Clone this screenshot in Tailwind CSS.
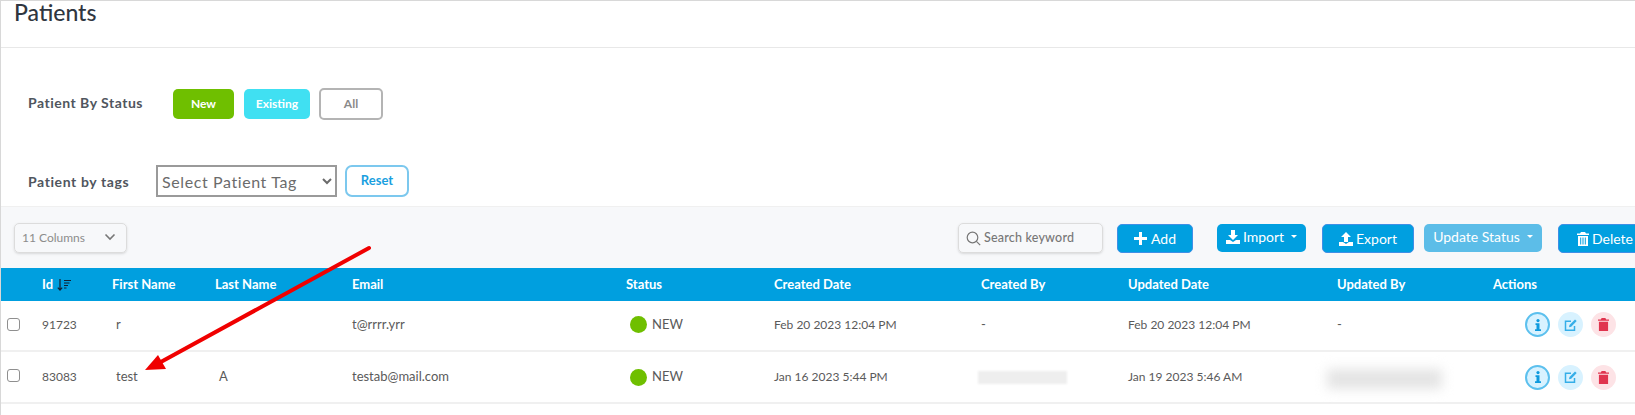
<!DOCTYPE html>
<html lang="en">
<head>
    <meta charset="UTF-8">
    <title>Patients</title>
    <script src="https://cdn.jsdelivr.net/npm/@tailwindcss/browser@4"></script>
</head>
<body class="bg-white overflow-hidden font-[Lato,sans-serif]">
<div class="relative w-[1635px] h-[415px] overflow-hidden border-l border-t border-[#d8d8d8]">
    <!-- title -->
    <div class="h-[47px] border-b border-[#e8e8e8] pl-[13px]">
        <h1 class="text-[23px] leading-[22px] text-[#2f3640] font-medium">Patients</h1>
    </div>

    <!-- status filter -->
    <div class="flex items-center h-[32px] mt-[40px] pl-[27px]">
        <span class="w-[145px] pb-[3px] text-[14px] font-bold tracking-[0.5px] text-[#50565e]">Patient By Status</span>
        <button class="w-[61px] h-[30px] rounded-[5px] bg-[#6fbf00] text-white text-[12px] font-bold">New</button>
        <button class="w-[66px] h-[30px] ml-[10px] rounded-[5px] bg-[#40e0f2] text-white text-[12px] font-bold">Existing</button>
        <button class="w-[64px] h-[32px] ml-[9px] rounded-[5px] border-2 border-[#b4b4b4] text-[#8a8a8a] text-[12px] font-bold">All</button>
    </div>

    <!-- tag filter -->
    <div class="flex items-center h-[32px] mt-[45px] pl-[27px]">
        <span class="w-[128px] text-[14px] font-bold tracking-[0.6px] text-[#50565e]">Patient by tags</span>
        <select class="w-[181px] h-[32px] border-2 border-[#9a9a9a] text-[#6b6b6b] text-[16px] tracking-[0.6px]">
            <option>Select Patient Tag</option>
        </select>
        <button class="w-[64px] h-[32px] ml-[8px] rounded-[7px] border-2 border-[#7cc8ee] text-[#1a9fe0] text-[13px] font-bold">Reset</button>
    </div>

    <!-- toolbar -->
    <div class="flex items-start h-[62px] mt-[9px] pt-[16px] pl-[13px] bg-[#f7f8fa] border-t border-[#f0f0f0]">
        <div class="flex items-center justify-between shrink-0 w-[113px] h-[30px] px-[7px] rounded-[5px] border border-[#dcdcdc] shadow-sm text-[12px] text-[#8c8c8c]">
            <span>11 Columns</span>
            <svg class="w-[12px] h-[12px] mr-[3px] mb-[3px]" viewBox="0 0 12 12" fill="none" stroke="#777" stroke-width="1.6"><path d="M1.5 3.5 6 8l4.5-4.5"/></svg>
        </div>

        <div class="flex items-center shrink-0 w-[145px] h-[30px] ml-[831px] pl-[7px] rounded-[5px] border border-[#dcdcdc] shadow-sm text-[12.5px] font-medium tracking-[0.2px] text-[#777]">
            <svg class="w-[15px] h-[15px] mr-[3px]" viewBox="0 0 15 15" fill="none" stroke="#777" stroke-width="1.2"><circle cx="6.5" cy="6.5" r="5.3"/><path d="m10.4 10.4 3.800 3.800"/></svg>
            <span>Search keyword</span>
        </div>

        <button class="flex items-center justify-center shrink-0 gap-[4px] w-[76px] h-[29px] ml-[14px] mt-[1px] rounded-[5px] bg-[#009fe0] border border-[#3f8fe6] text-white text-[14px]">
            <svg class="w-[13px] h-[13px]" viewBox="0 0 13 13" fill="#fff"><path d="M5 0h3v5h5v3H8v5H5V8H0V5h5z"/></svg>
            Add
        </button>

        <button class="flex items-center justify-center shrink-0 w-[89px] h-[28px] ml-[24px] mt-[1px] rounded-[5px] bg-[#009fe0] text-white text-[14px] pb-[3px]">
            <svg class="w-[14px] h-[14px] mr-[3px]" viewBox="0 0 14 14" fill="#fff"><path d="M5 0h4v5h3L7 10 2 5h3zM0 10h4l3 2 3-2h4v4H0z"/></svg>
            Import
            <span class="ml-[7px] border-x-[3px] border-t-[3px] border-x-transparent border-t-white"></span>
        </button>

        <button class="flex items-center justify-center shrink-0 w-[92px] h-[29px] ml-[16px] mt-[1px] rounded-[5px] bg-[#009fe0] border border-[#3f8fe6] text-white text-[14px]">
            <svg class="w-[14px] h-[14px] mr-[3px]" viewBox="0 0 14 14" fill="#fff"><path d="M7 0l5 5H9v5H5V5H2zM0 10h4l3 2 3-2h4v4H0z"/></svg>
            Export
        </button>

        <button class="flex items-center justify-center shrink-0 w-[118px] h-[28px] ml-[10px] mt-[1px] rounded-[5px] bg-[#5cbde8] text-white text-[14px] pb-[3px]">
            Update Status
            <span class="ml-[7px] border-x-[3px] border-t-[3px] border-x-transparent border-t-white"></span>
        </button>

        <button class="flex items-center shrink-0 w-[100px] h-[29px] ml-[16px] mt-[1px] pl-[18px] rounded-[5px] bg-[#009fe0] border border-[#3f8fe6] text-white text-[14px]">
            <svg class="w-[12px] h-[14px] mr-[3px]" viewBox="0 0 12 14" fill="#fff"><path d="M4 0h4l1 1.500h3V3H0V1.500h3zM1 4h10v10H1zm2.200 1.500v7h1v-7zm2.300 0v7h1v-7zm2.300 0v7h1v-7z" fill-rule="evenodd"/></svg>
            Delete
        </button>
    </div>

    <!-- table head -->
    <div class="grid grid-cols-[41px_70px_103px_137px_274px_148px_207px_147px_209px_156px_143px] items-center h-[33px] bg-[#009fdf] text-white text-[13px] font-bold">
        <div></div>
        <div class="flex items-center gap-[4px]">Id
            <svg class="w-[14px] h-[12px]" viewBox="0 0 14 12" fill="none" stroke="#123" stroke-width="1.2"><path d="M3 0v11M.8 8.600 3 11l2.200-2.400M7 1.500h7M7 4h5.500M7 6.500h4M7 9h2.500"/></svg>
        </div>
        <div>First Name</div>
        <div>Last Name</div>
        <div>Email</div>
        <div>Status</div>
        <div>Created Date</div>
        <div>Created By</div>
        <div>Updated Date</div>
        <div>Updated By</div>
        <div>Actions</div>
    </div>

    <!-- rows -->
    <div class="grid grid-cols-[41px_70px_103px_137px_274px_148px_207px_147px_209px_156px_143px] items-center h-[51px] border-b-2 border-[#f0f0f0] text-[13px] text-[#5a5a5a] pb-[2px]">
        <div class="pl-[6px]"><div class="w-[13px] h-[13px] mb-[1px] rounded-[3px] border border-[#8f8f8f] bg-white"></div></div>
        <div class="text-[12px]">91723</div>
        <div class="pl-[4px]">r</div>
        <div class="pl-[4px]"></div>
        <div>t@rrrr.yrr</div>
        <div class="flex items-center pl-[4px]"><span class="w-[17px] h-[17px] mr-[5px] rounded-full bg-[#6fbf00]"></span>NEW</div>
        <div class="text-[12px]">Feb 20 2023 12:04 PM</div>
        <div>-</div>
        <div class="text-[12px]">Feb 20 2023 12:04 PM</div>
        <div>-</div>
        <div class="flex items-center gap-[8px] pl-[32px]">
            <span class="flex items-center justify-center shrink-0 w-[25px] h-[25px] rounded-full bg-[#d8f2ff] border-2 border-[#5cc0ee]">
                <svg class="w-[8px] h-[12px]" viewBox="0 0 8 12" fill="#0e9ade"><circle cx="4" cy="1.600" r="1.600"/><path d="M1.500 4.200h4v6h1.500V12H1v-1.800h1.500V6H1.500z"/></svg>
            </span>
            <span class="flex items-center justify-center shrink-0 w-[25px] h-[25px] rounded-full bg-[#d8f2ff]">
                <svg class="w-[14px] h-[14px]" viewBox="0 0 14 14" fill="none" stroke="#35aee8" stroke-width="1.500"><path d="M10.500 8v4.200H1.500V3.200H7"/><path d="M5 9.200l.5-2.300L11 1.400l1.700 1.700L7.200 8.700z" fill="#35aee8" stroke="none"/></svg>
            </span>
            <span class="flex items-center justify-center shrink-0 w-[25px] h-[25px] rounded-full bg-[#fde3e6]">
                <svg class="w-[11px] h-[13px]" viewBox="0 0 12 14" fill="#e0354f"><path d="M4 0h4l1 1.500h3V3H0V1.500h3zM1 4h10v10H1z"/></svg>
            </span>
        </div>
    </div>
    <div class="grid grid-cols-[41px_70px_103px_137px_274px_148px_207px_147px_209px_156px_143px] items-center h-[52px] border-b-2 border-[#f0f0f0] text-[13px] text-[#5a5a5a]">
        <div class="pl-[6px]"><div class="w-[13px] h-[13px] mb-[3px] rounded-[3px] border border-[#8f8f8f] bg-white"></div></div>
        <div class="text-[12px]">83083</div>
        <div class="pl-[4px]">test</div>
        <div class="pl-[4px]">A</div>
        <div>testab@mail.com</div>
        <div class="flex items-center pl-[4px]"><span class="w-[17px] h-[17px] mr-[5px] rounded-full bg-[#6fbf00]"></span>NEW</div>
        <div class="text-[12px]">Jan 16 2023 5:44 PM</div>
        <div></div>
        <div class="text-[12px]">Jan 19 2023 5:46 AM</div>
        <div></div>
        <div class="flex items-center gap-[8px] pl-[32px]">
            <span class="flex items-center justify-center shrink-0 w-[25px] h-[25px] rounded-full bg-[#d8f2ff] border-2 border-[#5cc0ee]">
                <svg class="w-[8px] h-[12px]" viewBox="0 0 8 12" fill="#0e9ade"><circle cx="4" cy="1.600" r="1.600"/><path d="M1.500 4.200h4v6h1.500V12H1v-1.800h1.500V6H1.500z"/></svg>
            </span>
            <span class="flex items-center justify-center shrink-0 w-[25px] h-[25px] rounded-full bg-[#d8f2ff]">
                <svg class="w-[14px] h-[14px]" viewBox="0 0 14 14" fill="none" stroke="#35aee8" stroke-width="1.500"><path d="M10.500 8v4.200H1.500V3.200H7"/><path d="M5 9.200l.5-2.300L11 1.400l1.700 1.700L7.200 8.700z" fill="#35aee8" stroke="none"/></svg>
            </span>
            <span class="flex items-center justify-center shrink-0 w-[25px] h-[25px] rounded-full bg-[#fde3e6]">
                <svg class="w-[11px] h-[13px]" viewBox="0 0 12 14" fill="#e0354f"><path d="M4 0h4l1 1.500h3V3H0V1.500h3zM1 4h10v10H1z"/></svg>
            </span>
        </div>
    </div>

    <!-- redaction smudges -->
    <div class="absolute left-[977px] top-[370px] w-[89px] h-[13px] bg-[#eeeeee] blur-[1px]"></div>
    <div class="absolute left-[1326px] top-[368px] w-[115px] h-[20px] bg-[#e4e4e4] blur-[6px]"></div>

    <!-- annotation arrow -->
    <svg class="absolute left-0 top-0 w-[1635px] h-[415px] pointer-events-none" viewBox="0 0 1635 415" fill="#f00000">
        <path d="M368 247 158 362" stroke="#f00000" stroke-width="4" stroke-linecap="round"/>
        <path d="M144 369 157 354 165 368z"/>
    </svg>
</div>
</body>
</html>
